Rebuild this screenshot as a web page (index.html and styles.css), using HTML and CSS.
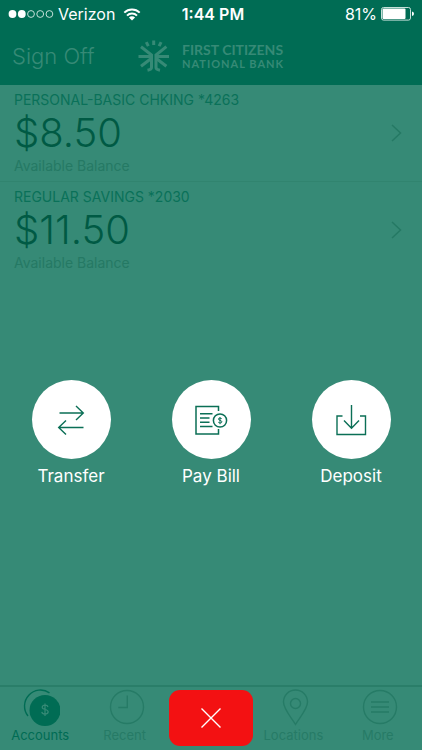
FILE: index.html
```html
<!DOCTYPE html>
<html lang="en">
<head>
<meta charset="utf-8">
<meta name="viewport" content="width=device-width, initial-scale=1">
<title>Accounts</title>
<link rel="stylesheet" href="styles.css">
</head>
<body>
<header class="header">
  <div class="status">
    <div class="status-left">
      <svg class="dots" width="46" height="10" viewBox="0 0 46 10" aria-hidden="true">
        <g fill="#fff"><circle cx="4.5" cy="5" r="3.9"/><circle cx="13.8" cy="5" r="3.9"/></g>
        <g fill="none" stroke="#c5e0d9" stroke-width="1"><circle cx="23" cy="5" r="3.4"/><circle cx="32.2" cy="5" r="3.4"/><circle cx="41.4" cy="5" r="3.4"/></g>
      </svg>
      <span>Verizon</span>
      <svg width="18" height="13" viewBox="0 0 18 13" aria-hidden="true">
        <g fill="none" stroke="#fff" stroke-width="2"><path d="M1.3 4.6a11 11 0 0 1 15.4 0"/><path d="M4 7.6a7 7 0 0 1 10 0"/></g>
        <path d="M9 12.6 5.9 9.5a4.4 4.4 0 0 1 6.2 0z" fill="#fff"/>
      </svg>
    </div>
    <span class="time">1:44 PM</span>
    <div class="status-right">
      <span>81%</span>
      <svg width="33" height="14" viewBox="0 0 33 14" aria-hidden="true">
        <rect x=".5" y=".5" width="29" height="12.6" rx="2" fill="none" stroke="#c5e0d9"/>
        <rect x="1.500" y="1.500" width="23" height="10.6" rx="1" fill="#fff"/>
        <path d="M31 4.5q2 .4 2 2.3t-2 2.3z" fill="#fff"/>
      </svg>
    </div>
  </div>
  <nav class="nav">
    <a class="signoff" href="#">Sign Off</a>
    <div class="brand">
      <svg width="32" height="32" viewBox="0 0 32 32" aria-hidden="true">
        <g fill="none" stroke="#368a76" stroke-width="3">
          <path d="M15.7.5v4.500M8.300 2.200l2 4M23.100 2.200l-2 4"/>
          <path d="M3 6.700 13.500 15v12.500q0 2-4 2.800M28.400 6.700 18 15v12.500q0 2 4 2.800"/>
          <path d="M.5 16.600h12.500M31 16.600H18.500M3 26.300l10.500-8M28.400 26.300l-10.400-8"/>
        </g>
      </svg>
      <div class="brand-name"><span>FIRST CITIZENS</span><span class="brand-sub">NATIONAL BANK</span></div>
    </div>
  </nav>
</header>
<main class="main">
  <a class="account" href="#">
    <span class="info"><span class="name">PERSONAL-BASIC CHKING *4263</span><span class="amount">$8.50</span><span class="caption">Available Balance</span></span>
    <svg width="11" height="18" viewBox="0 0 11 18" aria-hidden="true"><path d="m1 1 8.500 8L1 17" fill="none" stroke="#257964" stroke-width="1.500"/></svg>
  </a>
  <a class="account" href="#">
    <span class="info"><span class="name">REGULAR SAVINGS *2030</span><span class="amount">$11.50</span><span class="caption">Available Balance</span></span>
    <svg width="11" height="18" viewBox="0 0 11 18" aria-hidden="true"><path d="m1 1 8.500 8L1 17" fill="none" stroke="#257964" stroke-width="1.500"/></svg>
  </a>
  <div class="actions">
    <button class="action" type="button">
      <span class="disc"><svg width="40" height="40" viewBox="0 0 40 40" aria-hidden="true"><path d="M8.500 13H32M25 6l7.300 7-7.300 7M32.500 27.500H8M15 20.500l-7.300 7 7.300 7" fill="none" stroke="#0b6f56" stroke-width="1.400"/></svg></span>
      <span>Transfer</span>
    </button>
    <button class="action" type="button">
      <span class="disc"><svg width="40" height="40" viewBox="0 0 40 40" aria-hidden="true"><g fill="none" stroke="#0b6f56" stroke-width="1.500"><path d="M27.500 11V6.500H5v27.500h22.500v-5M9 13.700h12.500M9 18h9.500M9 22.200h9.500M9 26.500h12.500"/><circle cx="29" cy="20.500" r="6.600"/><path d="M30.700 18.600q-3.300-1.300-3.300.4c0 1.500 3.500 1.200 3.500 2.800 0 1.500-2.300 1.200-3.600.5M29 17v7.200" stroke-width="1"/></g></svg></span>
      <span>Pay Bill</span>
    </button>
    <button class="action" type="button">
      <span class="disc"><svg width="40" height="40" viewBox="0 0 40 40" aria-hidden="true"><path d="M11.500 16h-5.500v18.500h28.500V16H29M20.500 5v23M13 20.500l7.500 7.700 7.500-7.700" fill="none" stroke="#0b6f56" stroke-width="1.400"/></svg></span>
      <span>Deposit</span>
    </button>
  </div>
</main>
<footer class="tabs">
  <a class="tab current" href="#">
    <svg width="40" height="38" viewBox="0 0 40 38" aria-hidden="true"><path d="M29.500 4.800A16 16 0 0 0 8 28" fill="none" stroke="#006c54" stroke-width="1.400"/><circle cx="25" cy="22.500" r="15.500" fill="#006c54"/><path d="M28 19q-.4-1.800-3-1.800t-2.800 2c0 3 6 1.600 6 4.700q-.3 2.200-3.200 2.200t-3.200-2.200M25 15.500v12.500" fill="none" stroke="#368a76" stroke-width="1.200"/></svg>
    <span>Accounts</span>
  </a>
  <a class="tab" href="#">
    <svg width="40" height="38" viewBox="0 0 40 38" aria-hidden="true"><g fill="none" stroke="#267b66" stroke-width="1.400"><circle cx="22" cy="19" r="16.500"/><path d="M22.300 7.500v12h-9"/></g></svg>
    <span>Recent</span>
  </a>
  <button class="close" type="button" aria-label="Close">
    <svg width="20" height="20" viewBox="0 0 20 20" aria-hidden="true"><path d="m.5.5 19 19m0-19-19 19" stroke="#fff" stroke-width="1.400"/></svg>
  </button>
  <a class="tab" href="#">
    <svg width="40" height="38" viewBox="0 0 40 38" aria-hidden="true"><g fill="none" stroke="#267b66" stroke-width="1.400"><path d="M22.500 36.500C18 29 10.500 21 10.500 14a12 12 0 0 1 24 0c0 7-7.500 15-12 22.500z"/><circle cx="22.500" cy="15.500" r="5"/></g></svg>
    <span>Locations</span>
  </a>
  <a class="tab" href="#">
    <svg width="40" height="38" viewBox="0 0 40 38" aria-hidden="true"><g fill="none" stroke="#267b66" stroke-width="1.400"><circle cx="22" cy="19" r="16.500"/><path d="M13 14h18M13 19h18M13 24h18"/></g></svg>
    <span>More</span>
  </a>
</footer>
</body>
</html>
```
FILE: styles.css
```css
* { box-sizing: border-box; }
body {
  margin: 0;
  min-height: 100vh;
  display: flex;
  flex-direction: column;
  background: #368a76;
  color: #fff;
  font-family: Inter, "Liberation Sans", sans-serif;
}
a { color: inherit; text-decoration: none; }
button { border: 0; padding: 0; color: inherit; font: inherit; }
svg { display: block; flex: none; }
.header { background: #006c54; }
.status {
  display: grid;
  grid-template-columns: 1fr auto 1fr;
  align-items: center;
  height: 28px;
  padding: 0 8px;
  font-size: 16px;
  line-height: 20px;
}
.status-left, .status-right { display: flex; align-items: center; gap: 4px; }
.status-left svg:last-child { margin-left: 4px; }
.status-right { justify-content: flex-end; }
.time { font-weight: 600; padding-left: 4px; }
.nav { display: flex; align-items: center; height: 57px; padding: 0 12px 2px; }
.signoff { width: 126px; font-size: 22px; font-weight: 300; color: #368a76; }
.brand { display: flex; align-items: center; gap: 12px; color: #368a76; }
.brand-name {
  display: flex;
  flex-direction: column;
  font: 700 14px/15px Lato, sans-serif;
}
.brand-sub { font-size: 11px; line-height: 13px; letter-spacing: 1px; }
.main { flex: 1; display: flex; flex-direction: column; }
.account {
  display: flex;
  align-items: center;
  justify-content: space-between;
  height: 97px;
  padding: 0 20px 0 14px;
  border-bottom: 1px solid #31846f;
}
.account:nth-child(2) { border-color: transparent; }
.info { display: flex; flex-direction: column; }
.name { font-size: 14px; line-height: 20px; color: #0a7159; }
.amount { font-size: 40px; line-height: 46px; font-weight: 300; color: #005a44; }
.caption { font-size: 14px; line-height: 20px; color: #257964; }
.actions {
  display: flex;
  justify-content: space-between;
  margin-top: auto;
  margin-bottom: 198px;
  padding: 0 20px;
}
.action {
  display: flex;
  flex-direction: column;
  align-items: center;
  gap: 6px;
  width: 102px;
  background: none;
  font-size: 17px;
  line-height: 22px;
}
.disc {
  display: grid;
  place-items: center;
  width: 79px;
  height: 79px;
  border-radius: 50%;
  background: #fff;
}
.tabs {
  display: grid;
  grid-template-columns: repeat(5, 1fr);
  height: 65px;
  border-top: 2px solid #2a7e69;
}
.tab {
  display: flex;
  flex-direction: column;
  align-items: center;
  padding: 1px 4px 0 0;
  font-size: 13px;
  line-height: 18px;
  color: #267b66;
}
.current { color: #006c54; }
.close {
  display: grid;
  place-items: center;
  height: 56px;
  margin-top: 3px;
  border-radius: 11px;
  background: #f31112;
}
```
